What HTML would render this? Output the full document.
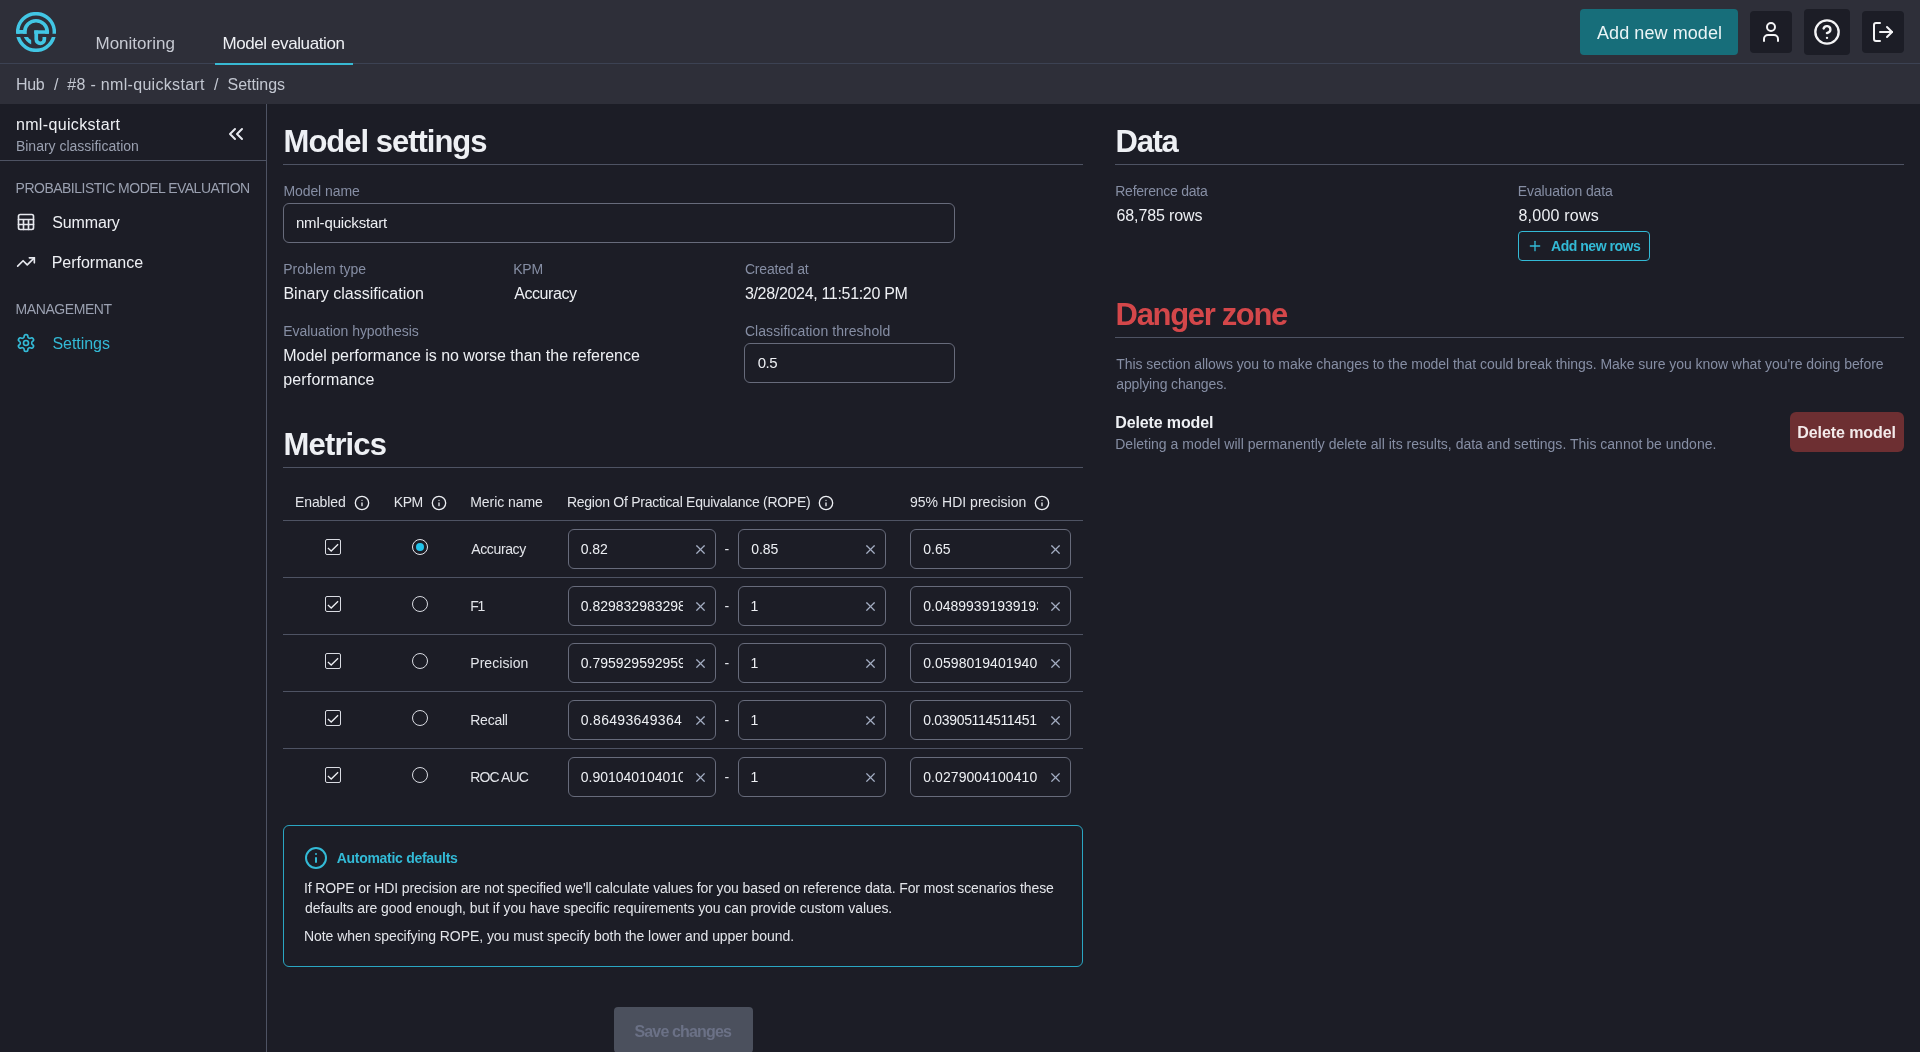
<!DOCTYPE html>
<html><head><meta charset="utf-8"><title>Model settings</title>
<style>
html,body{margin:0;padding:0;background:#1c1d26;}
body{width:1920px;height:1052px;position:relative;overflow:hidden;font-family:"Liberation Sans",sans-serif;}
.b{position:absolute;display:block;}
.t{position:absolute;white-space:pre;line-height:1;}
.clip{position:absolute;overflow:hidden;}
#tl{position:absolute;left:0;top:0;width:1920px;height:1052px;will-change:transform;}
</style></head>
<body>
<div class="b" style="left:0px;top:0px;width:1920px;height:104px;background:#2e2f39;"></div>
<div class="b" style="left:0px;top:63px;width:1920px;height:1px;background:#3c4253;"></div>
<div class="b" style="left:215px;top:63px;width:138px;height:2px;background:#38b9d3;"></div>
<div class="b" style="left:1580px;top:9px;width:158px;height:46px;background:#176e7a;border-radius:4px;"></div>
<div class="b" style="left:1750px;top:11px;width:42px;height:42px;background:#1c1d26;border-radius:4px;"></div>
<div class="b" style="left:1804px;top:9px;width:46px;height:46px;background:#1c1d26;border-radius:4px;"></div>
<div class="b" style="left:1862px;top:11px;width:42px;height:42px;background:#1c1d26;border-radius:4px;"></div>
<div class="b" style="left:266px;top:104px;width:1px;height:948px;background:#4e5363;"></div>
<div class="b" style="left:0px;top:160px;width:266px;height:1px;background:#4e5363;"></div>
<div class="b" style="left:283px;top:164px;width:800px;height:1px;background:#4e5363;"></div>
<div class="b" style="left:283px;top:467px;width:800px;height:1px;background:#4e5363;"></div>
<div class="b" style="left:1115px;top:164px;width:789px;height:1px;background:#4e5363;"></div>
<div class="b" style="left:1115px;top:337px;width:789px;height:1px;background:#4e5363;"></div>
<div class="b" style="left:283px;top:203px;width:672px;height:40px;border:1px solid #676b7b;border-radius:6px;box-sizing:border-box;"></div>
<div class="b" style="left:744px;top:343px;width:211px;height:40px;border:1px solid #676b7b;border-radius:6px;box-sizing:border-box;"></div>
<div class="b" style="left:283px;top:520px;width:800px;height:1px;background:#4e5363;"></div>
<div class="b" style="left:283px;top:577px;width:800px;height:1px;background:#4e5363;"></div>
<div class="b" style="left:568px;top:529px;width:148px;height:40px;border:1px solid #676b7b;border-radius:6px;box-sizing:border-box;"></div>
<div class="b" style="left:738px;top:529px;width:148px;height:40px;border:1px solid #676b7b;border-radius:6px;box-sizing:border-box;"></div>
<div class="b" style="left:910px;top:529px;width:161px;height:40px;border:1px solid #676b7b;border-radius:6px;box-sizing:border-box;"></div>
<div class="b" style="left:325px;top:539px;width:16px;height:16px;border:1px solid #d9dbe2;border-radius:2px;box-sizing:border-box;"></div>
<div class="b" style="left:412px;top:539px;width:16px;height:16px;border:1px solid #e6e8ee;border-radius:50%;box-sizing:border-box;"></div>
<div class="b" style="left:416px;top:543px;width:8px;height:8px;background:#22c3ea;border-radius:50%;"></div>
<div class="b" style="left:283px;top:634px;width:800px;height:1px;background:#4e5363;"></div>
<div class="b" style="left:568px;top:586px;width:148px;height:40px;border:1px solid #676b7b;border-radius:6px;box-sizing:border-box;"></div>
<div class="b" style="left:738px;top:586px;width:148px;height:40px;border:1px solid #676b7b;border-radius:6px;box-sizing:border-box;"></div>
<div class="b" style="left:910px;top:586px;width:161px;height:40px;border:1px solid #676b7b;border-radius:6px;box-sizing:border-box;"></div>
<div class="b" style="left:325px;top:596px;width:16px;height:16px;border:1px solid #d9dbe2;border-radius:2px;box-sizing:border-box;"></div>
<div class="b" style="left:412px;top:596px;width:16px;height:16px;border:1px solid #d9dbe2;border-radius:50%;box-sizing:border-box;"></div>
<div class="b" style="left:283px;top:691px;width:800px;height:1px;background:#4e5363;"></div>
<div class="b" style="left:568px;top:643px;width:148px;height:40px;border:1px solid #676b7b;border-radius:6px;box-sizing:border-box;"></div>
<div class="b" style="left:738px;top:643px;width:148px;height:40px;border:1px solid #676b7b;border-radius:6px;box-sizing:border-box;"></div>
<div class="b" style="left:910px;top:643px;width:161px;height:40px;border:1px solid #676b7b;border-radius:6px;box-sizing:border-box;"></div>
<div class="b" style="left:325px;top:653px;width:16px;height:16px;border:1px solid #d9dbe2;border-radius:2px;box-sizing:border-box;"></div>
<div class="b" style="left:412px;top:653px;width:16px;height:16px;border:1px solid #d9dbe2;border-radius:50%;box-sizing:border-box;"></div>
<div class="b" style="left:283px;top:748px;width:800px;height:1px;background:#4e5363;"></div>
<div class="b" style="left:568px;top:700px;width:148px;height:40px;border:1px solid #676b7b;border-radius:6px;box-sizing:border-box;"></div>
<div class="b" style="left:738px;top:700px;width:148px;height:40px;border:1px solid #676b7b;border-radius:6px;box-sizing:border-box;"></div>
<div class="b" style="left:910px;top:700px;width:161px;height:40px;border:1px solid #676b7b;border-radius:6px;box-sizing:border-box;"></div>
<div class="b" style="left:325px;top:710px;width:16px;height:16px;border:1px solid #d9dbe2;border-radius:2px;box-sizing:border-box;"></div>
<div class="b" style="left:412px;top:710px;width:16px;height:16px;border:1px solid #d9dbe2;border-radius:50%;box-sizing:border-box;"></div>
<div class="b" style="left:568px;top:757px;width:148px;height:40px;border:1px solid #676b7b;border-radius:6px;box-sizing:border-box;"></div>
<div class="b" style="left:738px;top:757px;width:148px;height:40px;border:1px solid #676b7b;border-radius:6px;box-sizing:border-box;"></div>
<div class="b" style="left:910px;top:757px;width:161px;height:40px;border:1px solid #676b7b;border-radius:6px;box-sizing:border-box;"></div>
<div class="b" style="left:325px;top:767px;width:16px;height:16px;border:1px solid #d9dbe2;border-radius:2px;box-sizing:border-box;"></div>
<div class="b" style="left:412px;top:767px;width:16px;height:16px;border:1px solid #d9dbe2;border-radius:50%;box-sizing:border-box;"></div>
<div class="b" style="left:283px;top:825px;width:800px;height:142px;border:1px solid #2aa6c2;border-radius:6px;box-sizing:border-box;"></div>
<div class="b" style="left:614px;top:1007px;width:139px;height:46px;background:#4b505d;border-radius:4px;"></div>
<div class="b" style="left:1518px;top:231px;width:132px;height:30px;border:1px solid #33bad6;border-radius:4px;box-sizing:border-box;"></div>
<div class="b" style="left:1790px;top:412px;width:114px;height:40px;background:#6d2f32;border-radius:6px;"></div>
<svg class="b" style="left:16px;top:12px" width="40" height="40" viewBox="0 0 40 40" fill="none" stroke="#42c6e4">
<defs>
<clipPath id="lo"><rect x="-1" y="-1" width="42" height="22.8"/><rect x="-1" y="25" width="42" height="17"/></clipPath>
<clipPath id="li"><rect x="-1" y="-1" width="42" height="22.8"/><rect x="-1" y="25" width="16.2" height="17"/></clipPath>
</defs>
<circle cx="20" cy="20" r="18.35" stroke-width="3.5" clip-path="url(#lo)"/>
<circle cx="20" cy="20" r="11.3" stroke-width="3.6" clip-path="url(#li)"/>
<rect x="0.6" y="18" width="9.8" height="3.8" fill="#42c6e4" stroke="none"/>
<rect x="18.2" y="18.3" width="14.6" height="3.5" fill="#42c6e4" stroke="none"/>
<path d="M20.25 18.4 V27.3 A4.05 4.05 0 0 0 28.35 27.3 V25" stroke-width="3.7"/>
</svg>
<svg class="b" style="left:1759px;top:20px" width="24" height="24" viewBox="0 0 24 24" fill="none" stroke="#f4f4f6" stroke-width="2" stroke-linecap="round" stroke-linejoin="round"><path d="M19 21v-2a4 4 0 0 0-4-4H9a4 4 0 0 0-4 4v2"/><circle cx="12" cy="7" r="4"/></svg>
<svg class="b" style="left:1813px;top:18px" width="28" height="28" viewBox="0 0 24 24" fill="none" stroke="#f4f4f6" stroke-width="2" stroke-linecap="round" stroke-linejoin="round"><circle cx="12" cy="12" r="10"/><path d="M9.09 9a3 3 0 0 1 5.83 1c0 2-3 3-3 3"/><path d="M12 17h.01"/></svg>
<svg class="b" style="left:1871px;top:20px" width="24" height="24" viewBox="0 0 24 24" fill="none" stroke="#f4f4f6" stroke-width="2" stroke-linecap="round" stroke-linejoin="round"><path d="M9 21H5a2 2 0 0 1-2-2V5a2 2 0 0 1 2-2h4"/><polyline points="16 17 21 12 16 7"/><line x1="21" y1="12" x2="9" y2="12"/></svg>
<svg class="b" style="left:224px;top:122px" width="24" height="24" viewBox="0 0 24 24" fill="none" stroke="#e6e8ee" stroke-width="2" stroke-linecap="round" stroke-linejoin="round"><polyline points="11 17 6 12 11 7"/><polyline points="18 17 13 12 18 7"/></svg>
<svg class="b" style="left:16px;top:212px" width="20" height="20" viewBox="0 0 24 24" fill="none" stroke="#e6e8ee" stroke-width="2" stroke-linecap="round" stroke-linejoin="round"><rect x="3" y="3" width="18" height="18" rx="2"/><path d="M3 9h18M3 15h18M9 9v12M15 9v12"/></svg>
<svg class="b" style="left:16px;top:252px" width="20" height="20" viewBox="0 0 24 24" fill="none" stroke="#e6e8ee" stroke-width="2" stroke-linecap="round" stroke-linejoin="round"><polyline points="22 7 13.5 15.5 8.5 10.5 2 17"/><polyline points="16 7 22 7 22 13"/></svg>
<svg class="b" style="left:16px;top:333px" width="20" height="20" viewBox="0 0 24 24" fill="none" stroke="#33bad6" stroke-width="2" stroke-linecap="round" stroke-linejoin="round"><path d="M12.22 2h-.44a2 2 0 0 0-2 2v.18a2 2 0 0 1-1 1.73l-.43.25a2 2 0 0 1-2 0l-.15-.08a2 2 0 0 0-2.73.73l-.22.38a2 2 0 0 0 .73 2.73l.15.1a2 2 0 0 1 1 1.72v.51a2 2 0 0 1-1 1.74l-.15.09a2 2 0 0 0-.73 2.73l.22.38a2 2 0 0 0 2.73.73l.15-.08a2 2 0 0 1 2 0l.43.25a2 2 0 0 1 1 1.73V20a2 2 0 0 0 2 2h.44a2 2 0 0 0 2-2v-.18a2 2 0 0 1 1-1.73l.43-.25a2 2 0 0 1 2 0l.15.08a2 2 0 0 0 2.73-.73l.22-.39a2 2 0 0 0-.73-2.73l-.15-.08a2 2 0 0 1-1-1.74v-.5a2 2 0 0 1 1-1.74l.15-.09a2 2 0 0 0 .73-2.73l-.22-.38a2 2 0 0 0-2.73-.73l-.15.08a2 2 0 0 1-2 0l-.43-.25a2 2 0 0 1-1-1.73V4a2 2 0 0 0-2-2z"/><circle cx="12" cy="12" r="3"/></svg>
<svg class="b" style="left:354px;top:494.75px" width="16" height="16" viewBox="0 0 24 24" fill="none" stroke="#eceef2" stroke-width="2" stroke-linecap="round" stroke-linejoin="round"><circle cx="12" cy="12" r="10"/><path d="M12 16v-4"/><path d="M12 8h.01"/></svg>
<svg class="b" style="left:431px;top:494.75px" width="16" height="16" viewBox="0 0 24 24" fill="none" stroke="#eceef2" stroke-width="2" stroke-linecap="round" stroke-linejoin="round"><circle cx="12" cy="12" r="10"/><path d="M12 16v-4"/><path d="M12 8h.01"/></svg>
<svg class="b" style="left:818px;top:494.75px" width="16" height="16" viewBox="0 0 24 24" fill="none" stroke="#eceef2" stroke-width="2" stroke-linecap="round" stroke-linejoin="round"><circle cx="12" cy="12" r="10"/><path d="M12 16v-4"/><path d="M12 8h.01"/></svg>
<svg class="b" style="left:1034px;top:494.75px" width="16" height="16" viewBox="0 0 24 24" fill="none" stroke="#eceef2" stroke-width="2" stroke-linecap="round" stroke-linejoin="round"><circle cx="12" cy="12" r="10"/><path d="M12 16v-4"/><path d="M12 8h.01"/></svg>
<svg class="b" style="left:304px;top:846px" width="24" height="24" viewBox="0 0 24 24" fill="none" stroke="#33bad6" stroke-width="2" stroke-linecap="round" stroke-linejoin="round"><circle cx="12" cy="12" r="10"/><path d="M12 16v-4"/><path d="M12 8h.01"/></svg>
<svg class="b" style="left:693.3px;top:542.1px" width="15" height="15" viewBox="0 0 24 24" fill="none" stroke="#a3adc2" stroke-width="1.9" stroke-linecap="round" stroke-linejoin="round"><path d="M18 6 6 18"/><path d="m6 6 12 12"/></svg>
<svg class="b" style="left:863.3px;top:542.1px" width="15" height="15" viewBox="0 0 24 24" fill="none" stroke="#a3adc2" stroke-width="1.9" stroke-linecap="round" stroke-linejoin="round"><path d="M18 6 6 18"/><path d="m6 6 12 12"/></svg>
<svg class="b" style="left:1048.3px;top:542.1px" width="15" height="15" viewBox="0 0 24 24" fill="none" stroke="#a3adc2" stroke-width="1.9" stroke-linecap="round" stroke-linejoin="round"><path d="M18 6 6 18"/><path d="m6 6 12 12"/></svg>
<svg class="b" style="left:325px;top:539px" width="16" height="16" viewBox="0 0 16 16" fill="none" stroke="#eceef2" stroke-width="1.3"><path d="M2.9 9.1 L6.2 12 L13.1 5.2"/></svg>
<svg class="b" style="left:693.3px;top:599.1px" width="15" height="15" viewBox="0 0 24 24" fill="none" stroke="#a3adc2" stroke-width="1.9" stroke-linecap="round" stroke-linejoin="round"><path d="M18 6 6 18"/><path d="m6 6 12 12"/></svg>
<svg class="b" style="left:863.3px;top:599.1px" width="15" height="15" viewBox="0 0 24 24" fill="none" stroke="#a3adc2" stroke-width="1.9" stroke-linecap="round" stroke-linejoin="round"><path d="M18 6 6 18"/><path d="m6 6 12 12"/></svg>
<svg class="b" style="left:1048.3px;top:599.1px" width="15" height="15" viewBox="0 0 24 24" fill="none" stroke="#a3adc2" stroke-width="1.9" stroke-linecap="round" stroke-linejoin="round"><path d="M18 6 6 18"/><path d="m6 6 12 12"/></svg>
<svg class="b" style="left:325px;top:596px" width="16" height="16" viewBox="0 0 16 16" fill="none" stroke="#eceef2" stroke-width="1.3"><path d="M2.9 9.1 L6.2 12 L13.1 5.2"/></svg>
<svg class="b" style="left:693.3px;top:656.1px" width="15" height="15" viewBox="0 0 24 24" fill="none" stroke="#a3adc2" stroke-width="1.9" stroke-linecap="round" stroke-linejoin="round"><path d="M18 6 6 18"/><path d="m6 6 12 12"/></svg>
<svg class="b" style="left:863.3px;top:656.1px" width="15" height="15" viewBox="0 0 24 24" fill="none" stroke="#a3adc2" stroke-width="1.9" stroke-linecap="round" stroke-linejoin="round"><path d="M18 6 6 18"/><path d="m6 6 12 12"/></svg>
<svg class="b" style="left:1048.3px;top:656.1px" width="15" height="15" viewBox="0 0 24 24" fill="none" stroke="#a3adc2" stroke-width="1.9" stroke-linecap="round" stroke-linejoin="round"><path d="M18 6 6 18"/><path d="m6 6 12 12"/></svg>
<svg class="b" style="left:325px;top:653px" width="16" height="16" viewBox="0 0 16 16" fill="none" stroke="#eceef2" stroke-width="1.3"><path d="M2.9 9.1 L6.2 12 L13.1 5.2"/></svg>
<svg class="b" style="left:693.3px;top:713.1px" width="15" height="15" viewBox="0 0 24 24" fill="none" stroke="#a3adc2" stroke-width="1.9" stroke-linecap="round" stroke-linejoin="round"><path d="M18 6 6 18"/><path d="m6 6 12 12"/></svg>
<svg class="b" style="left:863.3px;top:713.1px" width="15" height="15" viewBox="0 0 24 24" fill="none" stroke="#a3adc2" stroke-width="1.9" stroke-linecap="round" stroke-linejoin="round"><path d="M18 6 6 18"/><path d="m6 6 12 12"/></svg>
<svg class="b" style="left:1048.3px;top:713.1px" width="15" height="15" viewBox="0 0 24 24" fill="none" stroke="#a3adc2" stroke-width="1.9" stroke-linecap="round" stroke-linejoin="round"><path d="M18 6 6 18"/><path d="m6 6 12 12"/></svg>
<svg class="b" style="left:325px;top:710px" width="16" height="16" viewBox="0 0 16 16" fill="none" stroke="#eceef2" stroke-width="1.3"><path d="M2.9 9.1 L6.2 12 L13.1 5.2"/></svg>
<svg class="b" style="left:693.3px;top:770.1px" width="15" height="15" viewBox="0 0 24 24" fill="none" stroke="#a3adc2" stroke-width="1.9" stroke-linecap="round" stroke-linejoin="round"><path d="M18 6 6 18"/><path d="m6 6 12 12"/></svg>
<svg class="b" style="left:863.3px;top:770.1px" width="15" height="15" viewBox="0 0 24 24" fill="none" stroke="#a3adc2" stroke-width="1.9" stroke-linecap="round" stroke-linejoin="round"><path d="M18 6 6 18"/><path d="m6 6 12 12"/></svg>
<svg class="b" style="left:1048.3px;top:770.1px" width="15" height="15" viewBox="0 0 24 24" fill="none" stroke="#a3adc2" stroke-width="1.9" stroke-linecap="round" stroke-linejoin="round"><path d="M18 6 6 18"/><path d="m6 6 12 12"/></svg>
<svg class="b" style="left:325px;top:767px" width="16" height="16" viewBox="0 0 16 16" fill="none" stroke="#eceef2" stroke-width="1.3"><path d="M2.9 9.1 L6.2 12 L13.1 5.2"/></svg>
<svg class="b" style="left:1527px;top:238.2px" width="16" height="16" viewBox="0 0 24 24" fill="none" stroke="#33bad6" stroke-width="2" stroke-linecap="round" stroke-linejoin="round"><path d="M5 12h14"/><path d="M12 5v14"/></svg>
<div id="tl">
<span class="t" style="left:95.50px;top:35px;font-size:17px;color:#c6c9d2;">Monitoring</span>
<span class="t" style="left:222.40px;top:35px;font-size:17px;color:#eef0f4;letter-spacing:-0.398px;">Model evaluation</span>
<span class="t" style="left:1597.00px;top:24px;font-size:18px;color:#eaf4f6;letter-spacing:0.077px;">Add new model</span>
<span class="t" style="left:15.90px;top:77px;font-size:16px;color:#c3c7d1;letter-spacing:-0.302px;">Hub</span>
<span class="t" style="left:54.00px;top:77px;font-size:16px;color:#c3c7d1;">/</span>
<span class="t" style="left:67.25px;top:77px;font-size:16px;color:#c3c7d1;letter-spacing:0.311px;">#8 - nml-quickstart</span>
<span class="t" style="left:214.10px;top:77px;font-size:16px;color:#c3c7d1;">/</span>
<span class="t" style="left:227.50px;top:77px;font-size:16px;color:#c3c7d1;letter-spacing:-0.045px;">Settings</span>
<span class="t" style="left:15.90px;top:117px;font-size:16px;color:#eef0f4;letter-spacing:0.351px;">nml-quickstart</span>
<span class="t" style="left:15.90px;top:139px;font-size:14px;color:#9aa0b0;">Binary classification</span>
<span class="t" style="left:15.60px;top:181px;font-size:14px;color:#9aa0b0;letter-spacing:-0.513px;">PROBABILISTIC MODEL EVALUATION</span>
<span class="t" style="left:52.30px;top:215px;font-size:16px;color:#eef0f4;letter-spacing:-0.159px;">Summary</span>
<span class="t" style="left:51.70px;top:255px;font-size:16px;color:#eef0f4;letter-spacing:-0.020px;">Performance</span>
<span class="t" style="left:15.60px;top:302px;font-size:14px;color:#9aa0b0;letter-spacing:-0.432px;">MANAGEMENT</span>
<span class="t" style="left:52.40px;top:336px;font-size:16px;color:#33bad6;letter-spacing:-0.030px;">Settings</span>
<span class="t" style="left:283.60px;top:126px;font-size:31px;color:#eef0f4;letter-spacing:-1.010px;font-weight:700;">Model settings</span>
<span class="t" style="left:283.40px;top:184px;font-size:14px;color:#868ea4;letter-spacing:-0.073px;">Model name</span>
<span class="t" style="left:295.90px;top:215px;font-size:15px;color:#eef0f4;letter-spacing:-0.153px;">nml-quickstart</span>
<span class="t" style="left:283.25px;top:262px;font-size:14px;color:#868ea4;letter-spacing:0.028px;">Problem type</span>
<span class="t" style="left:283.40px;top:286px;font-size:16px;color:#eef0f4;letter-spacing:0.005px;">Binary classification</span>
<span class="t" style="left:513.25px;top:262px;font-size:14px;color:#868ea4;letter-spacing:-0.213px;">KPM</span>
<span class="t" style="left:514.25px;top:286px;font-size:16px;color:#eef0f4;letter-spacing:-0.435px;">Accuracy</span>
<span class="t" style="left:744.90px;top:262px;font-size:14px;color:#868ea4;letter-spacing:-0.176px;">Created at</span>
<span class="t" style="left:744.90px;top:286px;font-size:16px;color:#eef0f4;letter-spacing:-0.318px;">3/28/2024, 11:51:20 PM</span>
<span class="t" style="left:283.25px;top:324px;font-size:14px;color:#868ea4;letter-spacing:-0.035px;">Evaluation hypothesis</span>
<span class="t" style="left:283.25px;top:348px;font-size:16px;color:#eef0f4;letter-spacing:-0.019px;">Model performance is no worse than the reference</span>
<span class="t" style="left:283.25px;top:372px;font-size:16px;color:#eef0f4;letter-spacing:0.143px;">performance</span>
<span class="t" style="left:744.90px;top:324px;font-size:14px;color:#868ea4;letter-spacing:0.062px;">Classification threshold</span>
<span class="t" style="left:757.70px;top:355px;font-size:15px;color:#eef0f4;letter-spacing:-0.455px;">0.5</span>
<span class="t" style="left:283.60px;top:429px;font-size:31px;color:#eef0f4;letter-spacing:-0.859px;font-weight:700;">Metrics</span>
<span class="t" style="left:295.00px;top:495px;font-size:14px;color:#e3e5ea;letter-spacing:-0.099px;">Enabled</span>
<span class="t" style="left:393.80px;top:495px;font-size:14px;color:#e3e5ea;letter-spacing:-0.438px;">KPM</span>
<span class="t" style="left:470.25px;top:495px;font-size:14px;color:#e3e5ea;letter-spacing:-0.066px;">Meric name</span>
<span class="t" style="left:567.00px;top:495px;font-size:14px;color:#e3e5ea;letter-spacing:-0.270px;">Region Of Practical Equivalance (ROPE)</span>
<span class="t" style="left:910.00px;top:495px;font-size:14px;color:#e3e5ea;letter-spacing:0.022px;">95% HDI precision</span>
<span class="t" style="left:471.25px;top:542px;font-size:14px;color:#e3e5ea;letter-spacing:-0.367px;">Accuracy</span>
<div class="clip" style="left:580px;top:540px;width:103.2px;height:20px;"><span class="t" style="left:0.75px;top:2px;font-size:14px;color:#eef0f4;letter-spacing:-0.071px;">0.82</span></div>
<div class="clip" style="left:750px;top:540px;width:103.0px;height:20px;"><span class="t" style="left:1.20px;top:2px;font-size:14px;color:#eef0f4;letter-spacing:-0.054px;">0.85</span></div>
<div class="clip" style="left:922px;top:540px;width:115.7px;height:20px;"><span class="t" style="left:1.25px;top:2px;font-size:14px;color:#eef0f4;">0.65</span></div>
<span class="t" style="left:724.60px;top:542px;font-size:14px;color:#e3e5ea;">-</span>
<span class="t" style="left:470.25px;top:599px;font-size:14px;color:#e3e5ea;letter-spacing:-1.202px;">F1</span>
<div class="clip" style="left:580px;top:597px;width:103.2px;height:20px;"><span class="t" style="left:0.75px;top:2px;font-size:14px;color:#eef0f4;">0.8298329832983299</span></div>
<div class="clip" style="left:750px;top:597px;width:103.0px;height:20px;"><span class="t" style="left:0.60px;top:2px;font-size:14px;color:#eef0f4;">1</span></div>
<div class="clip" style="left:922px;top:597px;width:115.7px;height:20px;"><span class="t" style="left:1.25px;top:2px;font-size:14px;color:#eef0f4;">0.04899391939193919</span></div>
<span class="t" style="left:724.60px;top:599px;font-size:14px;color:#e3e5ea;">-</span>
<span class="t" style="left:470.25px;top:656px;font-size:14px;color:#e3e5ea;letter-spacing:0.057px;">Precision</span>
<div class="clip" style="left:580px;top:654px;width:103.2px;height:20px;"><span class="t" style="left:0.75px;top:2px;font-size:14px;color:#eef0f4;">0.7959295929592959</span></div>
<div class="clip" style="left:750px;top:654px;width:103.0px;height:20px;"><span class="t" style="left:0.60px;top:2px;font-size:14px;color:#eef0f4;">1</span></div>
<div class="clip" style="left:922px;top:654px;width:115.7px;height:20px;"><span class="t" style="left:1.25px;top:2px;font-size:14px;color:#eef0f4;letter-spacing:0.074px;">0.0598019401940</span></div>
<span class="t" style="left:724.60px;top:656px;font-size:14px;color:#e3e5ea;">-</span>
<span class="t" style="left:470.25px;top:713px;font-size:14px;color:#e3e5ea;letter-spacing:-0.249px;">Recall</span>
<div class="clip" style="left:580px;top:711px;width:103.2px;height:20px;"><span class="t" style="left:0.75px;top:2px;font-size:14px;color:#eef0f4;letter-spacing:0.309px;">0.86493649364</span></div>
<div class="clip" style="left:750px;top:711px;width:103.0px;height:20px;"><span class="t" style="left:0.60px;top:2px;font-size:14px;color:#eef0f4;">1</span></div>
<div class="clip" style="left:922px;top:711px;width:115.7px;height:20px;"><span class="t" style="left:1.25px;top:2px;font-size:14px;color:#eef0f4;letter-spacing:-0.324px;">0.03905114511451</span></div>
<span class="t" style="left:724.60px;top:713px;font-size:14px;color:#e3e5ea;">-</span>
<span class="t" style="left:470.25px;top:770px;font-size:14px;color:#e3e5ea;letter-spacing:-0.883px;">ROC AUC</span>
<div class="clip" style="left:580px;top:768px;width:103.2px;height:20px;"><span class="t" style="left:0.75px;top:2px;font-size:14px;color:#eef0f4;">0.9010401040104010</span></div>
<div class="clip" style="left:750px;top:768px;width:103.0px;height:20px;"><span class="t" style="left:0.60px;top:2px;font-size:14px;color:#eef0f4;">1</span></div>
<div class="clip" style="left:922px;top:768px;width:115.7px;height:20px;"><span class="t" style="left:1.25px;top:2px;font-size:14px;color:#eef0f4;letter-spacing:0.074px;">0.0279004100410</span></div>
<span class="t" style="left:724.60px;top:770px;font-size:14px;color:#e3e5ea;">-</span>
<span class="t" style="left:336.75px;top:851px;font-size:14px;color:#33bad6;letter-spacing:-0.293px;font-weight:700;">Automatic defaults</span>
<span class="t" style="left:304.00px;top:881px;font-size:14px;color:#e3e5ea;letter-spacing:-0.114px;">If ROPE or HDI precision are not specified we'll calculate values for you based on reference data. For most scenarios these</span>
<span class="t" style="left:305.00px;top:901px;font-size:14px;color:#e3e5ea;letter-spacing:-0.071px;">defaults are good enough, but if you have specific requirements you can provide custom values.</span>
<span class="t" style="left:304.00px;top:929px;font-size:14px;color:#e3e5ea;letter-spacing:-0.056px;">Note when specifying ROPE, you must specify both the lower and upper bound.</span>
<span class="t" style="left:634.50px;top:1024px;font-size:16px;color:#6b7186;letter-spacing:-0.848px;font-weight:700;">Save changes</span>
<span class="t" style="left:1115.60px;top:126px;font-size:31px;color:#eef0f4;letter-spacing:-1.350px;font-weight:700;">Data</span>
<span class="t" style="left:1115.25px;top:184px;font-size:14px;color:#868ea4;letter-spacing:-0.246px;">Reference data</span>
<span class="t" style="left:1116.50px;top:208px;font-size:16px;color:#eef0f4;letter-spacing:-0.116px;">68,785 rows</span>
<span class="t" style="left:1517.75px;top:184px;font-size:14px;color:#868ea4;letter-spacing:-0.099px;">Evaluation data</span>
<span class="t" style="left:1518.50px;top:208px;font-size:16px;color:#eef0f4;letter-spacing:0.220px;">8,000 rows</span>
<span class="t" style="left:1551.00px;top:239px;font-size:14px;color:#33bad6;letter-spacing:-0.465px;font-weight:700;">Add new rows</span>
<span class="t" style="left:1115.60px;top:299px;font-size:31px;color:#d4474a;letter-spacing:-1.339px;font-weight:700;">Danger zone</span>
<span class="t" style="left:1116.25px;top:357px;font-size:14px;color:#868ea4;letter-spacing:-0.048px;">This section allows you to make changes to the model that could break things. Make sure you know what you're doing before</span>
<span class="t" style="left:1116.25px;top:377px;font-size:14px;color:#868ea4;letter-spacing:-0.139px;">applying changes.</span>
<span class="t" style="left:1115.25px;top:415px;font-size:16px;color:#eef0f4;letter-spacing:-0.126px;font-weight:700;">Delete model</span>
<span class="t" style="left:1115.25px;top:437px;font-size:14px;color:#868ea4;letter-spacing:0.006px;">Deleting a model will permanently delete all its results, data and settings. This cannot be undone.</span>
<span class="t" style="left:1797.25px;top:425px;font-size:16px;color:#f3eaea;letter-spacing:-0.081px;font-weight:700;">Delete model</span>
</div>
</body></html>
